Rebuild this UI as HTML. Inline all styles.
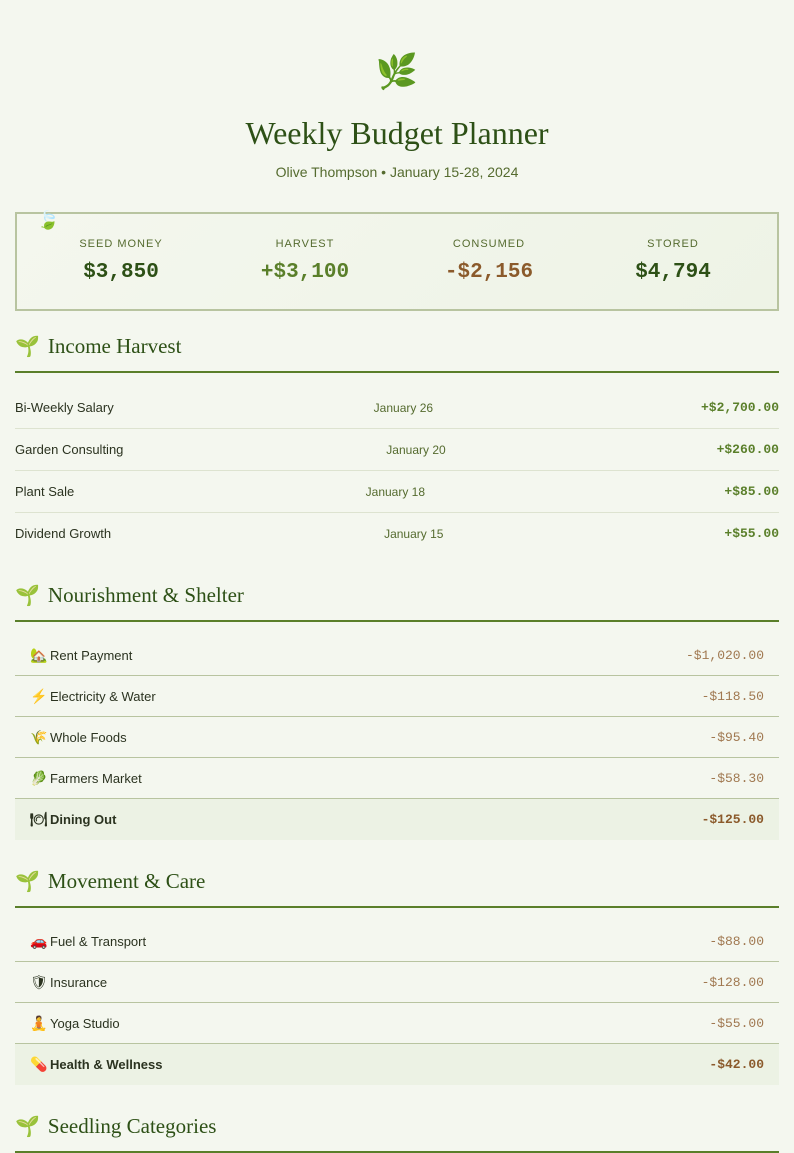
<!DOCTYPE html>
<html><head><meta charset="utf-8"><style>
*{box-sizing:border-box}
body{margin:0;background:#f4f7ef;font-family:"Liberation Sans",sans-serif;color:#2b3320;width:794px;height:1123px;overflow:hidden}
.leaf{position:absolute;top:52px;left:0;width:794px;text-align:center;font-size:34px;line-height:40px;color:#4a9a2a}
h1{position:absolute;top:113px;left:0;width:794px;margin:0;text-align:center;font-family:"Liberation Serif",serif;font-weight:normal;font-size:32px;line-height:40px;color:#2d5016}
.sub{position:absolute;top:163px;left:0;width:794px;text-align:center;font-size:14px;line-height:18px;color:#556b2f}
.box{position:absolute;top:212px;left:15px;width:764px;height:99px;border:2px solid #b8c4a0;background:linear-gradient(135deg,#f4f7ee,#eef3e6);display:flex;padding:0 12px}
.box .c{flex:1;text-align:center}
.box .l{margin-top:23px;font-size:11px;letter-spacing:1px;color:#556b2f;line-height:14px}
.box .v{margin-top:10px;font-family:"Liberation Mono",monospace;font-weight:bold;font-size:21px;line-height:24px}
.bl{position:absolute;left:20px;top:-4px;font-size:18px;color:#4a9a2a}
.sections{position:absolute;top:331px;left:15px;width:764px}
h2{margin:0;height:42px;line-height:30px;padding-bottom:10px;border-bottom:2px solid #5a7f2a;font-family:"Liberation Serif",serif;font-weight:normal;font-size:21px;color:#2d5016}
h2 .s{color:#5aa02c;font-size:20px;margin-right:8px;font-family:"DejaVu Sans",sans-serif}
.list{margin-top:13px;margin-bottom:26px}
.list.inc{margin-top:14px}
.ir{height:42px;display:flex;justify-content:space-between;align-items:center;border-bottom:1px solid #dde3d0;font-size:13px}
.ir:last-child{border-bottom:none;height:41px}
.ir .d{color:#556b2f;font-size:12px;margin-right:8px}
.ir .a{font-family:"Liberation Mono",monospace;font-weight:bold;color:#5a7f2a;font-size:13px}
.er{height:41px;display:flex;justify-content:space-between;align-items:center;padding:0 15px;border-bottom:1px solid #b8c4a0;font-size:13px}
.er:last-child{border-bottom:none;background:#ecf2e4;font-weight:bold}
.er .a{font-family:"Liberation Mono",monospace;color:#a07850;font-size:13px}
.er:last-child .a{color:#8b5a2b;font-weight:bold}
.ic{display:inline-block;width:20px;font-size:14px}
</style></head><body>
<div class="leaf">🌿</div>
<h1>Weekly Budget Planner</h1>
<div class="sub">Olive Thompson • January 15-28, 2024</div>
<div class="box"><span class="bl">🍃</span>
<div class="c"><div class="l">SEED MONEY</div><div class="v" style="color:#2d5016">$3,850</div></div>
<div class="c"><div class="l">HARVEST</div><div class="v" style="color:#5a7f2a">+$3,100</div></div>
<div class="c"><div class="l">CONSUMED</div><div class="v" style="color:#8b5a2b">-$2,156</div></div>
<div class="c"><div class="l">STORED</div><div class="v" style="color:#2d5016">$4,794</div></div>
</div>
<div class="sections">
<h2><span class="s">🌱</span>Income Harvest</h2>
<div class="list inc">
<div class="ir"><span>Bi-Weekly Salary</span><span class="d">January 26</span><span class="a">+$2,700.00</span></div>
<div class="ir"><span>Garden Consulting</span><span class="d">January 20</span><span class="a">+$260.00</span></div>
<div class="ir"><span>Plant Sale</span><span class="d">January 18</span><span class="a">+$85.00</span></div>
<div class="ir"><span>Dividend Growth</span><span class="d">January 15</span><span class="a">+$55.00</span></div>
</div>
<h2><span class="s">🌱</span>Nourishment &amp; Shelter</h2>
<div class="list">
<div class="er"><span><span class="ic">🏡</span>Rent Payment</span><span class="a">-$1,020.00</span></div>
<div class="er"><span><span class="ic" style="color:#f0b020">⚡</span>Electricity &amp; Water</span><span class="a">-$118.50</span></div>
<div class="er"><span><span class="ic">🌾</span>Whole Foods</span><span class="a">-$95.40</span></div>
<div class="er"><span><span class="ic">🥬</span>Farmers Market</span><span class="a">-$58.30</span></div>
<div class="er"><span><span class="ic">🍽</span>Dining Out</span><span class="a">-$125.00</span></div>
</div>
<h2><span class="s">🌱</span>Movement &amp; Care</h2>
<div class="list">
<div class="er"><span><span class="ic">🚗</span>Fuel &amp; Transport</span><span class="a">-$88.00</span></div>
<div class="er"><span><span class="ic">🛡</span>Insurance</span><span class="a">-$128.00</span></div>
<div class="er"><span><span class="ic">🧘</span>Yoga Studio</span><span class="a">-$55.00</span></div>
<div class="er"><span><span class="ic">💊</span>Health &amp; Wellness</span><span class="a">-$42.00</span></div>
</div>
<h2><span class="s">🌱</span>Seedling Categories</h2>
</div>
</body></html>
